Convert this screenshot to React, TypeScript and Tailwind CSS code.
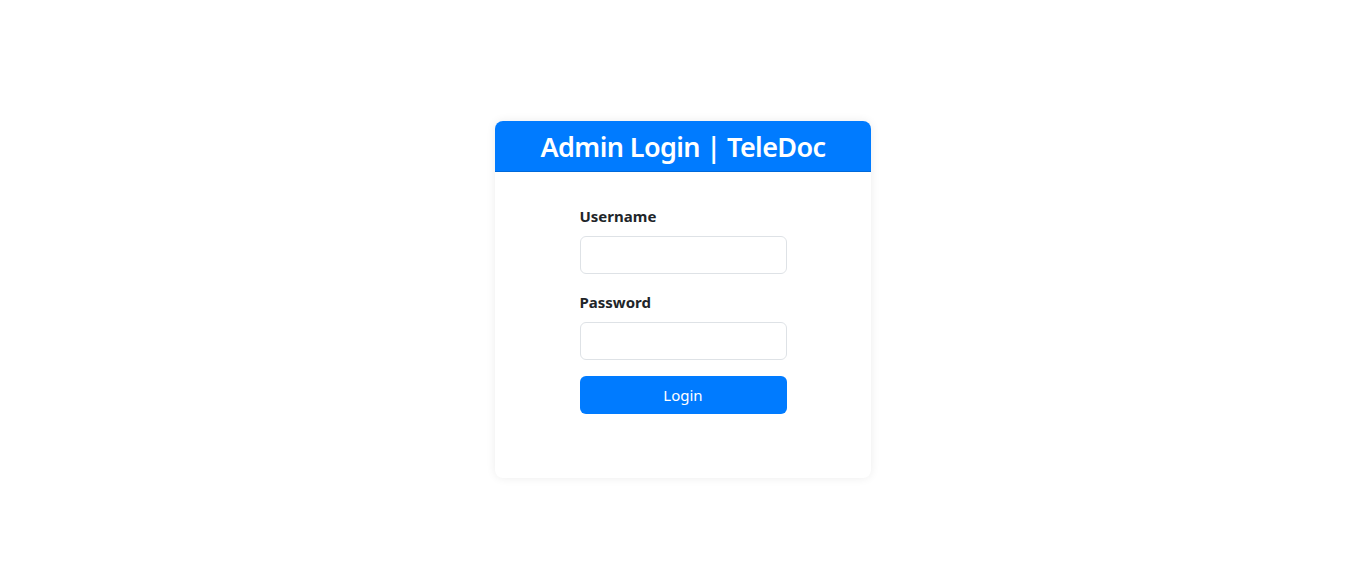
export default function App() {
  return (
    <div
      className="min-h-[580px] bg-white flex justify-center pt-[121px]"
      style={{ fontFamily: '"Noto Sans", "Open Sans", sans-serif' }}
    >
      <div className="w-[376px] h-[357px] rounded-lg bg-white shadow-[0_0_10px_rgba(0,0,0,0.08)] overflow-hidden flex flex-col">
        <div className="h-[51px] bg-[#007bff] border-b border-[#0069d9] flex items-center justify-center">
          <h2 className="text-[27px] font-semibold text-white leading-none tracking-[-0.6px]">
            Admin Login | TeleDoc
          </h2>
        </div>
        <div className="flex justify-center pt-[32px]">
          <form className="w-[207px] flex flex-col" onSubmit={(e) => e.preventDefault()}>
            <label className="text-[15px] font-bold text-[#212529] leading-6 mb-2">Username</label>
            <input
              type="text"
              className="h-[38px] rounded-md border border-[#dee2e6] mb-4 px-3 outline-none"
            />
            <label className="text-[15px] font-bold text-[#212529] leading-6 mb-2">Password</label>
            <input
              type="password"
              className="h-[38px] rounded-md border border-[#dee2e6] mb-4 px-3 outline-none"
            />
            <button
              type="submit"
              className="h-[38px] rounded-md bg-[#007bff] text-white text-[15px]"
            >
              Login
            </button>
          </form>
        </div>
      </div>
    </div>
  );
}
